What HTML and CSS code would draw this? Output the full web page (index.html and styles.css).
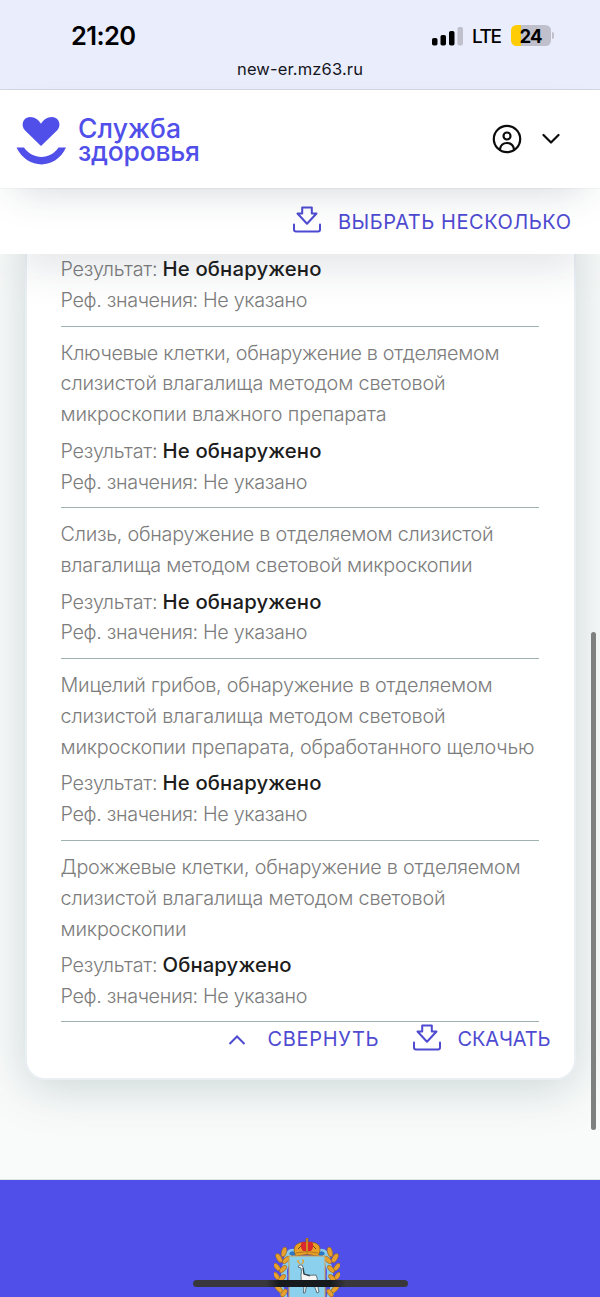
FILE: index.html
```html
<!DOCTYPE html>
<html lang="ru">
<head>
<meta charset="utf-8">
<title>Служба здоровья</title>
<link rel="stylesheet" href="styles.css">
</head>
<body>
<svg width="0" height="0" class="defs">
  <symbol id="download" viewBox="0 0 30 28">
    <path d="M10.2 1.5h9.6v6h4.7L15 17.7 5.500 7.500h4.700zM2 18.500v4.900q0 2 2 2h22q2 0 2-2v-4.900" fill="none" stroke="currentColor" stroke-width="2" stroke-linejoin="round" stroke-linecap="round"/>
  </symbol>
</svg>
<div class="status">
  <div class="status-row">
    <div class="clock"><span data-w="65">21:20</span></div>
    <div class="indicators">
      <svg class="signal" width="31" height="20" viewBox="0 0 31 20"><rect x="0" y="12" width="5.500" height="7.500" rx="1.800"/><rect x="8.500" y="9" width="5.500" height="10.500" rx="1.800"/><rect x="17" y="5" width="5.500" height="14.500" rx="1.800"/><rect x="25.500" y="1" width="5.500" height="18.500" rx="1.800" fill="#bfc0cc"/></svg>
      <span class="lte"><span data-w="30">LTE</span></span>
      <span class="battery"><span data-w="23">24</span></span><span class="battery-tip"></span>
    </div>
  </div>
  <div class="url"><span data-w="126">new-er.mz63.ru</span></div>
</div>
<header class="header">
  <div class="brand">
    <svg width="50" height="50" viewBox="0 0 50 50"><path d="M25 30 9.100 14.500C4.200 9.500 7 1 13.800 1c5.500 0 9 3 11.200 6.800C27.200 4 30.700 1 36.200 1c6.800 0 9.800 8.500 4.800 13.500z"/><path d="M.5 31.500H8C16.500 44 34.500 44 42.500 31.500H50C39.500 54 11.500 54 .5 31.500z"/></svg>
    <div class="brand-name"><span data-w="103">Служба</span><br><span data-w="122">здоровья</span></div>
  </div>
  <div class="account">
    <svg width="30" height="30" viewBox="0 0 30 30"><circle cx="15" cy="15" r="13.200"/><circle cx="15" cy="12" r="3.500"/><path d="M8 26v-1c1.500-8 12.500-8 14 0v1"/></svg>
    <svg width="18" height="12" viewBox="0 0 18 12"><path d="m1.500 2 7.500 7.500L16.500 2"/></svg>
  </div>
</header>
<div class="toolbar">
  <svg width="30" height="28"><use href="#download"/></svg>
  <span data-w="233">ВЫБРАТЬ НЕСКОЛЬКО</span>
</div>
<main class="main">
  <section class="card">
    <div class="item item-first">
      <p><span data-w="97">Результат:</span> <b data-w="159">Не обнаружено</b></p>
      <p><span data-w="247">Реф. значения: Не указано</span></p>
    </div>
    <div class="item">
      <h3><span data-w="439">Ключевые клетки, обнаружение в отделяемом</span><br><span data-w="385">слизистой влагалища методом световой</span><br><span data-w="326">микроскопии влажного препарата</span></h3>
      <p><span data-w="97">Результат:</span> <b data-w="159">Не обнаружено</b></p>
      <p><span data-w="247">Реф. значения: Не указано</span></p>
    </div>
    <div class="item">
      <h3><span data-w="433">Слизь, обнаружение в отделяемом слизистой</span><br><span data-w="412">влагалища методом световой микроскопии</span></h3>
      <p><span data-w="97">Результат:</span> <b data-w="159">Не обнаружено</b></p>
      <p><span data-w="247">Реф. значения: Не указано</span></p>
    </div>
    <div class="item">
      <h3><span data-w="432">Мицелий грибов, обнаружение в отделяемом</span><br><span data-w="385">слизистой влагалища методом световой</span><br><span data-w="474">микроскопии препарата, обработанного щелочью</span></h3>
      <p><span data-w="97">Результат:</span> <b data-w="159">Не обнаружено</b></p>
      <p><span data-w="247">Реф. значения: Не указано</span></p>
    </div>
    <div class="item">
      <h3><span data-w="460">Дрожжевые клетки, обнаружение в отделяемом</span><br><span data-w="385">слизистой влагалища методом световой</span><br><span data-w="126">микроскопии</span></h3>
      <p><span data-w="97">Результат:</span> <b data-w="129">Обнаружено</b></p>
      <p><span data-w="247">Реф. значения: Не указано</span></p>
    </div>
    <div class="actions">
      <svg class="chevron" width="18" height="12" viewBox="0 0 18 12"><path d="M1.500 10 9 2.500 16.500 10"/></svg>
      <span class="collapse"><span data-w="111">СВЕРНУТЬ</span></span>
      <svg class="load" width="30" height="28"><use href="#download"/></svg>
      <span data-w="93">СКАЧАТЬ</span>
    </div>
  </section>
  <div class="scrollbar"></div>
</main>
<footer class="footer">
  <svg class="crest" width="66" height="60" viewBox="0 0 66 60">
    <g fill="none" stroke="#8acbea" stroke-width="6"><path d="M23 15C11 10 14 23 11 29s2 10-3 16 4 10 2 15M43 15c12-5 9 8 12 14s-2 10 3 16-4 10-2 15"/></g>
    <g id="leaves" fill="#e9a12d" stroke="#8c5f28" stroke-width=".6">
      <ellipse cx="10" cy="14" rx="2.500" ry="5" transform="rotate(15 10 14)"/><ellipse cx="5" cy="20" rx="2.500" ry="5" transform="rotate(-30 5 20)"/><ellipse cx="12" cy="22" rx="2.300" ry="4.500" transform="rotate(45 12 22)"/><ellipse cx="3" cy="29" rx="2.300" ry="4.500" transform="rotate(-40 3 29)"/><ellipse cx="9" cy="31" rx="2.300" ry="4.500" transform="rotate(45 9 31)"/><ellipse cx="2.500" cy="38" rx="2.300" ry="4.500" transform="rotate(-35 2.500 38)"/><ellipse cx="8" cy="40" rx="2.300" ry="4.500" transform="rotate(45 8 40)"/><ellipse cx="5" cy="51" rx="2.500" ry="5" transform="rotate(-45 5 51)"/><ellipse cx="10" cy="55" rx="2.300" ry="4.500" transform="rotate(35 10 55)"/>
    </g>
    <use href="#leaves" transform="matrix(-1 0 0 1 66 0)"/>
    <path d="M15 16q2-5 7-1l-2 4zM51 16q-2-5-7-1l2 4z" fill="#2877c9"/>
    <path d="M22 18C17 8 23 4 32 4V0h2v4c10 0 15 4 10 14q-11-3-22 0z" fill="#e8a126" stroke="#875319" stroke-width=".7"/>
    <path d="M28 4q-3 4 1 9h3V4zM38 4q3 4-1 9h-3V4z" fill="#d9292f"/><path d="M22 15q11-3 22 0M33 1v15" stroke="#b5761f" fill="none"/><path d="m24 11 3-3M42 11l-3-3" stroke="#734615"/>
    <rect x="15" y="18" width="36" height="45" fill="#8bd0ec" stroke="#d6a348"/>
    <path d="M24 29q1-3 4-2 2 3 2 9 6 2 12 1 2 3 1 8l2 9-2 1-3-8-7-1-2 9h-1.500l.5-10q-4-3-3-8 1-4 0-7z" fill="#f4f6f5" stroke="#36444b" stroke-width=".7"/><path d="M26 26q-4-4-1-3M28 26q3-4 0-4" stroke="#d9a740" fill="none" stroke-width="1.500"/><path d="m29 30 1 6 6 2" stroke="#303d45" fill="none" stroke-width="1.200"/>
  </svg>
  <div class="home-bar"></div>
</footer>
<script src="fit.js"></script>
</body>
</html>
```
FILE: styles.css
```css
* { box-sizing: border-box; }
body { margin: 0; width: 600px; height: 1297px; overflow: hidden; background: #f9fbfa; font-family: Inter, "Open Sans", sans-serif; display: flex; flex-direction: column; }
.defs { position: absolute; }
[data-w] { white-space: nowrap; }
.status { height: 90px; flex: none; background: #eaedfc; border-bottom: 1px solid #d4d7e2; color: #000; }
.status-row { display: flex; height: 58px; padding: 13px 46px 0 71px; justify-content: space-between; align-items: center; }
.clock { font-size: 25.5px; font-weight: 600; }
.indicators { display: flex; align-items: center; }
.lte { width: 30px; margin: 0 9px; padding-top: 1px; font-size: 19px; font-weight: 500; }
.battery { width: 40px; height: 21px; border-radius: 5.5px; background: linear-gradient(90deg, #ffcc05 24%, #bfc0cc 24%); display: flex; align-items: center; justify-content: center; font-size: 18.5px; font-weight: 700; }
.battery-tip { width: 2px; height: 7px; margin-left: 1px; border-radius: 0 3px 3px 0; background: #bfc0cc; }
.url { text-align: center; font-size: 16.5px; line-height: 22px; color: #15151c; }
.header { position: relative; z-index: 3; height: 98px; flex: none; background: #fff; box-shadow: 0 16px 40px -16px #20384438, 0 0 1px #ccd3d8; display: flex; justify-content: space-between; align-items: center; padding: 0 40px 0 16px; }
.brand { display: flex; gap: 12px; align-items: center; fill: #514fe9; }
.brand svg { margin-top: 4px; }
.brand-name { font-size: 26.5px; line-height: 23px; font-weight: 500; color: #514fe9; padding-top: 1px; }
.account { display: flex; align-items: center; gap: 20px; fill: none; stroke: #0c0c0c; stroke-width: 2.2; stroke-linejoin: round; stroke-linecap: round; }
.toolbar { position: relative; z-index: 2; height: 66px; flex: none; background: #fff; box-shadow: 0 24px 45px -18px #20384434; display: flex; justify-content: flex-end; align-items: center; gap: 16px; padding: 1px 29px 0 0; color: #4e4bd1; font-size: 20px; }
.toolbar svg { margin-bottom: 4px; }
.main { position: relative; height: 926px; flex: none; padding: 0 24.5px; overflow: hidden; background: #f9fbfa; border-bottom: 1px solid #dce8e4; }
.card { height: 826px; background: #fff; border: 2px solid #eaeff4; border-top: 0; border-radius: 0 0 20px 20px; box-shadow: 0 8px 48px #2d545c38; padding: 0 35px 0 34px; }
.item { border-bottom: 1px solid #a0b1b2; padding: 11px 0 9.700px; font-size: 19.8px; color: #7c7c7c; font-weight: 300; line-height: 30.900px; }
.item-first { padding-top: 0; }
.item h3 { font: inherit; margin: 0 0 5.500px; }
.item p { margin: 0; display: flex; gap: 5px; }
.item b { font-weight: 500; font-size: 20.3px; color: #1c1c1c; }
.actions { display: flex; align-items: center; height: 34px; margin-right: -12px; justify-content: flex-end; color: #4e4bd1; font-size: 20px; }
.chevron { margin: 2px 21px 0 0; fill: none; stroke: currentColor; stroke-width: 2; }
.collapse { margin-right: 33px; }
.load { margin: 0 16px 3px 0; }
.scrollbar { position: absolute; right: 4px; top: 378px; width: 5px; height: 498px; border-radius: 3px; background: #7e8080; }
.footer { position: relative; flex: 1; overflow: hidden; background: #504fea; display: flex; justify-content: center; padding: 58px 0 0 14px; }
.crest { flex: none; }
.home-bar { position: absolute; left: 193px; bottom: 10px; width: 215px; height: 7px; border-radius: 4px; background: linear-gradient(90deg, #38383c 34%, #171a1c 40% 64%, #38383c 71%); }
```
FILE: fit.js
```js
// Track each label so that it fills its measure.
document.fonts.ready.then(() => {
  document.querySelectorAll('[data-w]').forEach(el => {
    const target = Number(el.dataset.w);
    const natural = el.getBoundingClientRect().width;
    const step = (target - natural) / (el.textContent.length - 1);
    el.style.letterSpacing = step + 'px';
    el.style.marginRight = -step + 'px';
  });
});
```
